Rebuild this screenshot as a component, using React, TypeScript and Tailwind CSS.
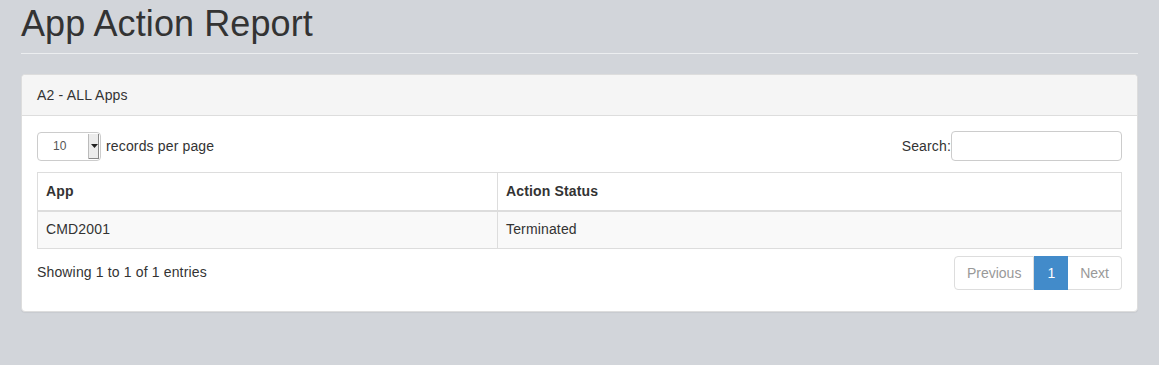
export default function App() {
  return (
    <div className="min-h-[365px] bg-[#d2d5da] px-[21px] pt-[3px] font-['Liberation_Sans',Arial,sans-serif] text-[14px] text-[#333]">
      <h1 className="text-[36px] leading-[42px] font-normal tracking-[0.1px] text-[#333]">App Action Report</h1>
      <div className="mt-[8px] border-t border-[#eceef0]" />
      <div className="mt-[20px] rounded-[4px] border border-[#ddd] bg-white shadow-[0_1px_1px_rgba(0,0,0,0.05)]">
        <div className="flex h-[41px] items-center rounded-t-[4px] border-b border-[#ddd] bg-[#f5f5f5] px-[15px] pt-[1px] tracking-[0.2px]">
          A2 - ALL Apps
        </div>
        <div className="px-[15px] pt-[15px] pb-[21px] tracking-[0.15px]">
          <div className="flex items-center justify-between">
            <div className="flex items-center gap-[5px]">
              <div className="flex h-[29px] w-[64px] items-stretch rounded-[4px] border border-[#ccc] bg-white">
                <span className="flex flex-1 items-center pl-[15px] text-[12px] text-[#555]">10</span>
                <span className="my-[1px] mr-[1px] flex w-[11px] items-center justify-center border-l border-[#bbb] bg-[#ececec] shadow-[inset_-1px_-1px_0_#888]">
                  <svg width="7" height="4" viewBox="0 0 7 4">
                    <path d="M0 0h7L3.5 4z" fill="#222" />
                  </svg>
                </span>
              </div>
              <span>records per page</span>
            </div>
            <label className="flex items-center">
              <span>Search:</span>
              <input className="h-[30px] w-[171px] rounded-[4px] border border-[#ccc] bg-white px-[6px] outline-none" />
            </label>
          </div>
          <table className="mt-[11px] w-full border-collapse border border-[#ddd]">
            <thead>
              <tr className="h-[38px]">
                <th className="w-[460px] border border-b-2 border-[#ddd] px-[8px] text-left font-bold">App</th>
                <th className="border border-b-2 border-[#ddd] px-[8px] text-left font-bold">Action Status</th>
              </tr>
            </thead>
            <tbody>
              <tr className="h-[38px] bg-[#f9f9f9]">
                <td className="border border-[#ddd] px-[8px]">CMD2001</td>
                <td className="border border-[#ddd] px-[8px]">Terminated</td>
              </tr>
            </tbody>
          </table>
          <div className="mt-[7px] flex items-center justify-between">
            <span className="mb-[2px]">Showing 1 to 1 of 1 entries</span>
            <div className="flex h-[34px] items-stretch text-[14px] tracking-normal">
              <span className="flex items-center rounded-l-[4px] border border-[#ddd] px-[12px] text-[#999]">Previous</span>
              <span className="flex items-center border border-[#428bca] bg-[#428bca] px-[12px] text-white">1</span>
              <span className="flex items-center rounded-r-[4px] border border-l-0 border-[#ddd] px-[12px] text-[#999]">Next</span>
            </div>
          </div>
        </div>
      </div>
    </div>
  );
}
